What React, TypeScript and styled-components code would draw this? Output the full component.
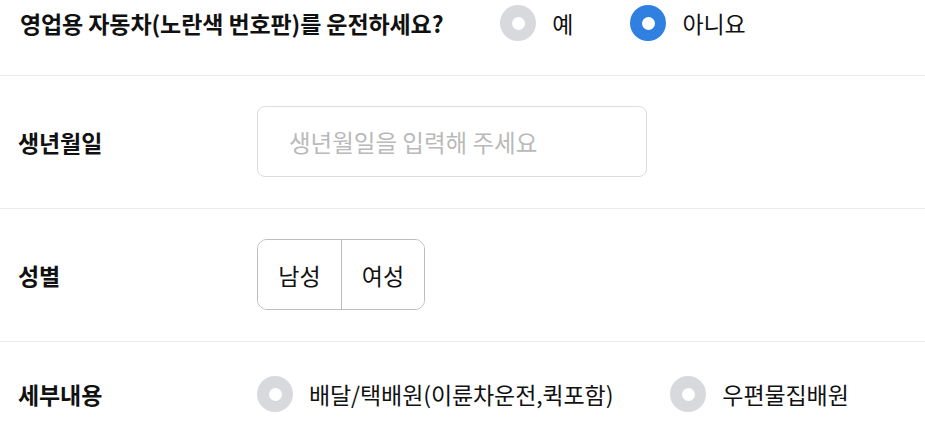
import React, { useState } from "react";
import styled, { createGlobalStyle } from "styled-components";

const Global = createGlobalStyle`
  html, body { margin: 0; padding: 0; background: #fff; }
  body { font-family: "Noto Sans CJK KR", "Noto Sans", sans-serif; color: #111; overflow: hidden; }
  * { box-sizing: border-box; }
`;

const Page = styled.div`
  width: 925px;
  display: flex;
  flex-direction: column;
`;

const Row = styled.div<{ $first?: boolean; $tall?: boolean }>`
  display: flex;
  align-items: center;
  padding: ${(p) => (p.$first ? "5px 0 34px 20px" : p.$tall ? "30px 0 31px 18px" : "34px 0 34px 18px")};
  border-bottom: 1px solid #ebebeb;
  &:last-child { border-bottom: none; }
`;

const Label = styled.div<{ $wide?: boolean }>`
  font-size: 23px;
  font-weight: 700;
  letter-spacing: -0.1px;
  width: ${(p) => (p.$wide ? "auto" : "239px")};
  margin-right: ${(p) => (p.$wide ? "57px" : "0")};
  flex-shrink: 0;
`;

const Options = styled.div`
  display: flex;
  align-items: center;
  gap: 57px;
`;

const Option = styled.label`
  display: flex;
  align-items: center;
  gap: 16px;
  font-size: 23px;
  letter-spacing: -0.1px;
  cursor: pointer;
`;

const Dot = styled.span<{ $on?: boolean }>`
  width: 36px;
  height: 36px;
  border-radius: 50%;
  background: ${(p) => (p.$on ? "#2f80e0" : "#d8d9dc")};
  display: flex;
  align-items: center;
  justify-content: center;
  &::after {
    content: "";
    width: 13px;
    height: 13px;
    border-radius: 50%;
    background: #fff;
  }
`;

const Input = styled.input`
  width: 390px;
  height: 71px;
  border: 1px solid #dcdcdc;
  border-radius: 8px;
  padding: 0 31px;
  font-family: inherit;
  font-size: 23.5px;
  outline: none;
  &::placeholder { color: #b9b9b9; }
`;

const Segment = styled.div`
  display: flex;
  height: 71px;
  border: 1px solid #bdbdbd;
  border-radius: 10px;
  overflow: hidden;
`;

const SegButton = styled.button`
  width: 83px;
  border: none;
  background: #fff;
  font-family: inherit;
  font-size: 23px;
  color: #111;
  padding: 0;
  & + & { border-left: 1px solid #bdbdbd; }
`;

function Radio({ on, text, onClick }: { on?: boolean; text: string; onClick?: () => void }) {
  return (
    <Option onClick={onClick}>
      <Dot $on={on} />
      {text}
    </Option>
  );
}

export default function App() {
  const [biz, setBiz] = useState(false);
  const [detail, setDetail] = useState<number | null>(null);
  return (
    <Page>
      <Global />
      <Row $first>
        <Label $wide>영업용 자동차(노란색 번호판)를 운전하세요?</Label>
        <Options>
          <Radio on={biz} text="예" onClick={() => setBiz(true)} />
          <Radio on={!biz} text="아니요" onClick={() => setBiz(false)} />
        </Options>
      </Row>
      <Row $tall>
        <Label>생년월일</Label>
        <Input placeholder="생년월일을 입력해 주세요" />
      </Row>
      <Row $tall>
        <Label>성별</Label>
        <Segment>
          <SegButton>남성</SegButton>
          <SegButton>여성</SegButton>
        </Segment>
      </Row>
      <Row>
        <Label>세부내용</Label>
        <Options>
          <Radio on={detail === 0} text="배달/택배원(이륜차운전,퀵포함)" onClick={() => setDetail(0)} />
          <Radio on={detail === 1} text="우편물집배원" onClick={() => setDetail(1)} />
        </Options>
      </Row>
    </Page>
  );
}
